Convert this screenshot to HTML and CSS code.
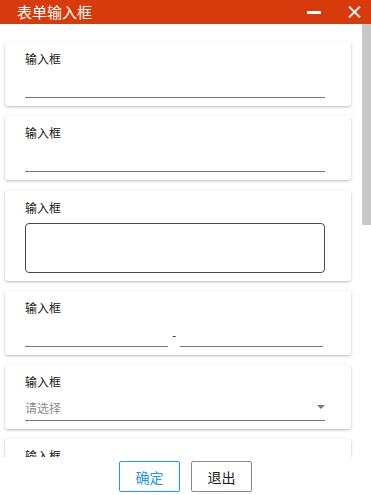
FILE: index.html
```html
<!DOCTYPE html>
<html lang="zh">
<head>
<meta charset="utf-8">
<title>表单输入框</title>
<link rel="stylesheet" href="styles.css">
</head>
<body>
<div class="window">
  <header class="titlebar">
    <span class="title">表单输入框</span>
    <div class="controls">
      <svg class="icon-min" width="14" height="3" viewBox="0 0 14 3"><rect x="0" y="0" width="14" height="3" fill="#fff"/></svg>
      <svg class="icon-close" width="13" height="12" viewBox="0 0 13 12"><path d="M1 0.5 L12 11.5 M12 0.5 L1 11.5" stroke="#fff" stroke-width="1.8" fill="none"/></svg>
    </div>
  </header>
  <div class="body">
    <main class="scroller">
      <div class="card">
        <div class="label">输入框</div>
        <div class="field line"></div>
      </div>
      <div class="card">
        <div class="label">输入框</div>
        <div class="field line"></div>
      </div>
      <div class="card">
        <div class="label">输入框</div>
        <div class="textarea"></div>
      </div>
      <div class="card">
        <div class="label">输入框</div>
        <div class="range">
          <div class="field line"></div>
          <span class="dash">-</span>
          <div class="field line"></div>
        </div>
      </div>
      <div class="card">
        <div class="label">输入框</div>
        <div class="field line select">
          <span class="placeholder">请选择</span>
          <span class="arrow"></span>
        </div>
      </div>
      <div class="card">
        <div class="label">输入框</div>
        <div class="field line"></div>
      </div>
    </main>
    <div class="scrollbar"><div class="thumb"></div></div>
  </div>
  <footer class="footer">
    <button class="btn btn-primary">确定</button>
    <button class="btn btn-default">退出</button>
  </footer>
</div>
</body>
</html>
```

FILE: styles.css
```css
* { box-sizing: border-box; }
html, body {
  margin: 0;
  padding: 0;
  background: #fff;
  font-family: "Noto Sans CJK SC", "Noto Sans", sans-serif;
  color: #222;
}
.window {
  width: 371px;
  height: 495px;
  display: flex;
  flex-direction: column;
  overflow: hidden;
}
.titlebar {
  height: 24px;
  flex: none;
  background: #d83b0b;
  display: flex;
  align-items: center;
  justify-content: space-between;
  padding: 0 10px 0 17px;
}
.title {
  color: #fff;
  font-size: 15px;
  line-height: 24px;
}
.controls {
  display: flex;
  align-items: center;
  gap: 27px;
}
.icon-min { display: block; margin-top: 1px; }
.icon-close { display: block; }
.body {
  height: 433px;
  flex: none;
  display: flex;
}
.scroller {
  flex: 1;
  overflow: hidden;
  padding: 18px 11px 0 5px;
}
.scrollbar {
  width: 9px;
  flex: none;
  background: #fff;
}
.thumb {
  height: 201px;
  background: #c8c8c8;
}
.card {
  background: #fff;
  border-radius: 3px;
  box-shadow: 0 1px 3px rgba(0, 0, 0, 0.28);
  padding: 8px 26px 8px 20px;
  margin-bottom: 10.25px;
}
.label {
  font-size: 12px;
  line-height: 17px;
  color: #1a1a1a;
}
.field {
  height: 31px;
}
.line {
  border-bottom: 1px solid #767676;
}
.textarea {
  margin-top: 7px;
  height: 50px;
  border: 1px solid #4a4a4a;
  border-radius: 4px;
}
.range {
  display: flex;
  align-items: flex-end;
  margin-right: 2px;
}
.range .field { flex: 1; }
.dash {
  width: 12px;
  text-align: center;
  font-size: 12px;
  line-height: 17px;
  margin-bottom: 4px;
  color: #222;
}
.select {
  display: flex;
  align-items: flex-end;
  justify-content: space-between;
  padding-bottom: 4px;
}
.placeholder {
  font-size: 12px;
  line-height: 17px;
  color: #8c8c8c;
}
.arrow {
  width: 0;
  height: 0;
  border-left: 4px solid transparent;
  border-right: 4px solid transparent;
  border-top: 4px solid #777;
  margin: 0 0 7px 0;
}
.footer {
  flex: 1;
  display: flex;
  justify-content: center;
  align-items: flex-start;
  gap: 11px;
  padding-top: 4px;
}
.btn {
  width: 61px;
  height: 31px;
  background: #fff;
  border-radius: 2px;
  font-family: "Noto Sans CJK SC", "Noto Sans", sans-serif;
  font-size: 14px;
  padding: 0;
  cursor: pointer;
}
.btn-primary {
  border: 1px solid #2196f3;
  color: #2196f3;
}
.btn-default {
  border: 1px solid #8a8a8a;
  color: #1a1a1a;
}
```
